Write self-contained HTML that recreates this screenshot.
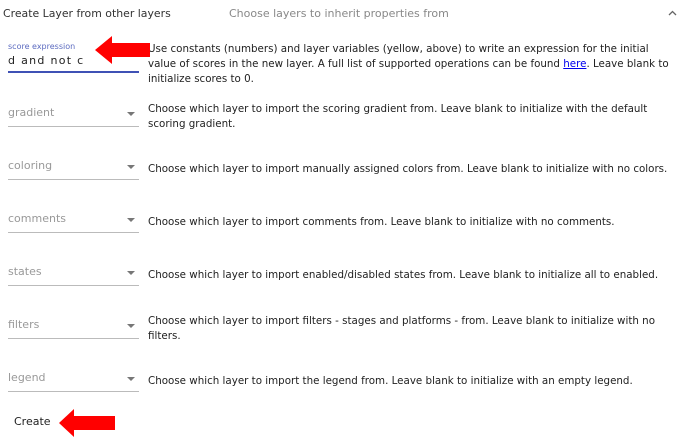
<!DOCTYPE html>
<html><head><style>
body{margin:0;width:681px;height:445px;background:#fff;font-family:"DejaVu Sans",sans-serif;position:relative;overflow:hidden;color:#222}
.a{position:absolute;white-space:nowrap}
.d{position:absolute;left:148px;font-size:10.3px;line-height:15px;color:#222;width:528px}
.f{position:absolute;left:8px;width:131px;border-bottom:1px solid #bbb;height:26px}
.f span{position:absolute;left:0;top:6px;font-size:11px;color:#999}
.f i{position:absolute;right:4px;top:12px;border-left:4px solid transparent;border-right:4px solid transparent;border-top:4px solid #777}
</style></head><body>
<div class="a" style="left:3px;top:7px;font-size:10.9px;color:#333">Create Layer from other layers</div>
<div class="a" style="left:229px;top:7px;font-size:11px;color:#888">Choose layers to inherit properties from</div>

<div class="a" style="left:8px;top:42px;font-size:8px;color:#5c6bc0">score expression</div>
<div class="a" style="left:8px;top:54px;font-size:11px;letter-spacing:1.3px;color:#222">d and not c</div>
<div class="a" style="left:8px;top:71px;width:131px;height:2px;background:#3f51b5"></div>
<div class="d" style="top:42px">Use constants (numbers) and layer variables (yellow, above) to write an expression for the initial value of scores in the new layer. A full list of supported operations can be found <u style="color:#00e">here</u>. Leave blank to initialize scores to 0.</div>

<div class="f" style="top:100px"><span>gradient</span><i></i></div>
<div class="d" style="top:102px">Choose which layer to import the scoring gradient from. Leave blank to initialize with the default scoring gradient.</div>
<div class="f" style="top:153px"><span>coloring</span><i></i></div>
<div class="d" style="top:162px">Choose which layer to import manually assigned colors from. Leave blank to initialize with no colors.</div>
<div class="f" style="top:206px"><span>comments</span><i></i></div>
<div class="d" style="top:215px">Choose which layer to import comments from. Leave blank to initialize with no comments.</div>
<div class="f" style="top:259px"><span>states</span><i></i></div>
<div class="d" style="top:268px">Choose which layer to import enabled/disabled states from. Leave blank to initialize all to enabled.</div>
<div class="f" style="top:312px"><span>filters</span><i></i></div>
<div class="d" style="top:314px">Choose which layer to import filters - stages and platforms - from. Leave blank to initialize with no filters.</div>
<div class="f" style="top:365px"><span>legend</span><i></i></div>
<div class="d" style="top:374px">Choose which layer to import the legend from. Leave blank to initialize with an empty legend.</div>

<div class="a" style="left:14px;top:415px;font-size:11px;color:#222">Create</div>

<svg class="a" style="left:0;top:0" width="681" height="445">
<polyline points="669,15 672.5,11.5 676,15" fill="none" stroke="#666" stroke-width="1.3"/>
<polygon points="95,50 112,36 112,43 150,43 150,57 112,57 112,64" fill="#f00"/>
<polygon points="59,423 74,409 74,416 115,416 115,430 74,430 74,437" fill="#f00"/>
</svg>
</body></html>
